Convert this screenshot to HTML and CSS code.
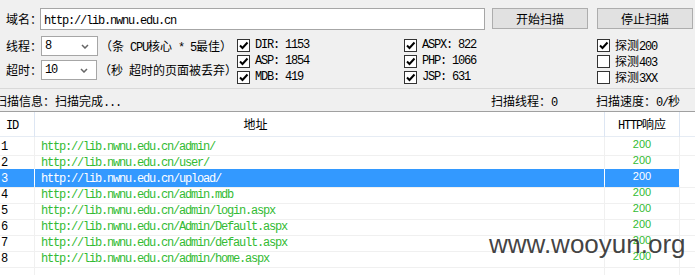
FILE: index.html
```html
<!DOCTYPE html>
<html lang="zh-CN">
<head>
    <meta charset="UTF-8">
    <meta name="viewport" content="width=device-width, initial-scale=1.0">
    <title>目录扫描</title>
    <link rel="stylesheet" href="styles.css">
</head>
<body>
    <div class="scanner">
        <div class="top-panel">
            <div class="domain-row">
                <span class="field-label">域名：</span>
                <div class="text-input"><span class="mono">http://lib.nwnu.edu.cn</span></div>
                <button class="btn">开始扫描</button>
                <button class="btn">停止扫描</button>
            </div>
            <div class="options">
                <div class="settings">
                    <div class="setting-row">
                        <span class="field-label">线程：</span>
                        <div class="select">
                            <span class="mono">8</span>
                            <svg width="8" height="5" viewBox="0 0 8 5"><path d="M1 1 L4 4 L7 1" fill="none" stroke="#666" stroke-width="1.5"/></svg>
                        </div>
                        <span class="hint">（条<span class="mono"> CPU</span>核心<span class="mono"> * 5</span>最佳）</span>
                    </div>
                    <div class="setting-row">
                        <span class="field-label">超时：</span>
                        <div class="select">
                            <span class="mono">10</span>
                            <svg width="8" height="5" viewBox="0 0 8 5"><path d="M1 1 L4 4 L7 1" fill="none" stroke="#666" stroke-width="1.5"/></svg>
                        </div>
                        <span class="hint">（秒<span class="mono"> </span>超时的页面被丢弃）</span>
                    </div>
                </div>
                <div class="checks">
                    <div class="check"><span class="box"><svg width="11" height="11" viewBox="0 0 11 11"><path d="M2 5.5 L4.5 8 L9.5 2.5" fill="none" stroke="#000" stroke-width="2"/></svg></span><span class="mono">DIR: 1153</span></div>
                    <div class="check"><span class="box"><svg width="11" height="11" viewBox="0 0 11 11"><path d="M2 5.5 L4.5 8 L9.5 2.5" fill="none" stroke="#000" stroke-width="2"/></svg></span><span class="mono">ASP: 1854</span></div>
                    <div class="check"><span class="box"><svg width="11" height="11" viewBox="0 0 11 11"><path d="M2 5.5 L4.5 8 L9.5 2.5" fill="none" stroke="#000" stroke-width="2"/></svg></span><span class="mono">MDB: 419</span></div>
                    <div class="check"><span class="box"><svg width="11" height="11" viewBox="0 0 11 11"><path d="M2 5.5 L4.5 8 L9.5 2.5" fill="none" stroke="#000" stroke-width="2"/></svg></span><span class="mono">ASPX: 822</span></div>
                    <div class="check"><span class="box"><svg width="11" height="11" viewBox="0 0 11 11"><path d="M2 5.5 L4.5 8 L9.5 2.5" fill="none" stroke="#000" stroke-width="2"/></svg></span><span class="mono">PHP: 1066</span></div>
                    <div class="check"><span class="box"><svg width="11" height="11" viewBox="0 0 11 11"><path d="M2 5.5 L4.5 8 L9.5 2.5" fill="none" stroke="#000" stroke-width="2"/></svg></span><span class="mono">JSP: 631</span></div>
                    <div class="check"><span class="box"><svg width="11" height="11" viewBox="0 0 11 11"><path d="M2 5.5 L4.5 8 L9.5 2.5" fill="none" stroke="#000" stroke-width="2"/></svg></span><span>探测<span class="mono">200</span></span></div>
                    <div class="check"><span class="box"></span><span>探测<span class="mono">403</span></span></div>
                    <div class="check"><span class="box"></span><span>探测<span class="mono">3XX</span></span></div>
                </div>
            </div>
        </div>

        <div class="status-bar">
            <span class="status-info">扫描信息：扫描完成<span class="mono">...</span></span>
            <span>扫描线程：<span class="mono">0</span></span>
            <span>扫描速度：<span class="mono">0/</span>秒</span>
        </div>

        <div class="result-table">
            <div class="grid-row table-head">
                <div class="head-cell col-id"><span class="mono">ID</span></div>
                <div class="head-cell col-url">地址</div>
                <div class="head-cell col-code"><span class="mono">HTTP</span>响应</div>
                <div class="head-cell filler"></div>
            </div>
            <div id="rows"></div>
            <div class="grid-row row tail">
                <div class="cell"></div>
                <div class="cell"></div>
                <div class="cell"></div>
                <div class="cell filler"></div>
            </div>
        </div>

        <div class="watermark">www.wooyun.org</div>
    </div>

    <script>
        const RESULTS = [
            'http://lib.nwnu.edu.cn/admin/',
            'http://lib.nwnu.edu.cn/user/',
            'http://lib.nwnu.edu.cn/upload/',
            'http://lib.nwnu.edu.cn/admin.mdb',
            'http://lib.nwnu.edu.cn/admin/login.aspx',
            'http://lib.nwnu.edu.cn/Admin/Default.aspx',
            'http://lib.nwnu.edu.cn/admin/default.aspx',
            'http://lib.nwnu.edu.cn/admin/home.aspx'
        ];
        const SELECTED_ROW = 3;

        const rowsElement = document.getElementById('rows');

        RESULTS.forEach((url, i) => {
            const row = document.createElement('div');
            row.className = 'grid-row row';
            if (i + 1 === SELECTED_ROW) {
                row.classList.add('selected');
            }
            row.innerHTML =
                `<div class="cell col-id"><span class="mono">${i + 1}</span></div>` +
                `<div class="cell col-url"><span class="mono">${url}</span></div>` +
                `<div class="cell col-code">200</div>` +
                `<div class="cell filler"></div>`;
            rowsElement.appendChild(row);
        });
    </script>
</body>
</html>
```

FILE: styles.css
```css
* {
    box-sizing: border-box;
}

body {
    margin: 0;
    width: 695px;
    height: 275px;
    overflow: hidden;
    background-color: #fff;
    font-family: "Noto Sans CJK SC", sans-serif;
    font-size: 12px;
    color: #000;
}

.scanner {
    position: relative;
    height: 275px;
}

.mono {
    font-family: "Liberation Mono", "Noto Sans CJK SC", monospace;
    letter-spacing: -1.2px;
}

/* top controls */
.top-panel {
    height: 89px;
    padding: 8px 2px 0 6px;
    background-color: #f0f0f0;
    border-bottom: 1px solid #d9d9d9;
}

.domain-row {
    display: flex;
    align-items: flex-start;
}

.field-label {
    width: 34px;
    white-space: nowrap;
    line-height: 22px;
}

.text-input {
    width: 445px;
    height: 22px;
    margin-right: 7px;
    padding: 0 3px;
    border: 1px solid #a6a6a6;
    background-color: #fff;
    line-height: 20px;
}

.btn {
    width: 96px;
    height: 21px;
    padding: 0;
    border: 1px solid #adadad;
    background-color: #e1e1e1;
    font-family: inherit;
    font-size: 12px;
    color: #000;
}

.btn + .btn {
    margin-left: 9px;
}

.options {
    display: flex;
    margin-top: 6px;
}

.settings {
    width: 231px;
    display: flex;
    flex-direction: column;
    gap: 4px;
}

.setting-row {
    display: flex;
    align-items: center;
    height: 20px;
}

.setting-row .field-label {
    width: 35px;
    line-height: 20px;
}

.select {
    display: flex;
    align-items: center;
    justify-content: space-between;
    width: 57px;
    height: 20px;
    margin-right: 2px;
    padding: 0 8px 0 3px;
    border: 1px solid #a6a6a6;
    background-color: #fff;
}

.hint {
    white-space: nowrap;
}

.checks {
    display: grid;
    grid-template-columns: 167px 193px auto;
    grid-template-rows: repeat(3, 16px);
    grid-auto-flow: column;
    margin-top: 1px;
}

.check {
    display: flex;
    align-items: center;
    gap: 5px;
    white-space: nowrap;
}

.box {
    display: flex;
    align-items: center;
    justify-content: center;
    width: 13px;
    height: 13px;
    border: 1px solid #333;
    background-color: #fff;
}

/* status line */
.status-bar {
    display: grid;
    grid-template-columns: 491px 105px auto;
    height: 23px;
    padding-top: 1px;
    background-color: #f0f0f0;
    border-bottom: 1px solid #a0a0a0;
    line-height: 21px;
    white-space: nowrap;
}

.status-info {
    margin-left: -5px;
}

/* result list */
.grid-row {
    display: grid;
    grid-template-columns: 35px 570px 75px 1fr;
}

.table-head {
    height: 25px;
    background-color: #fff;
    border-bottom: 1px solid #e6ecf4;
}

.head-cell {
    line-height: 24px;
    border-right: 1px solid #dde6f3;
}

.head-cell.col-id {
    padding-left: 6px;
}

.head-cell.col-url {
    text-align: center;
    padding-right: 128px;
}

.head-cell.col-code {
    text-align: center;
}

.head-cell.filler {
    border-right: none;
}

.row {
    height: 16px;
}

.cell {
    line-height: 15px;
    border-right: 1px solid #f0f0f0;
    border-bottom: 1px solid #f0f0f0;
    white-space: nowrap;
}

.cell.filler {
    border-right: none;
}

.cell.col-id {
    padding-left: 1px;
}

.cell.col-url {
    padding-left: 6px;
    color: #33bb33;
}

.cell.col-code {
    text-align: center;
    font-family: "Liberation Sans", sans-serif;
    font-size: 11px;
    color: #33bb33;
}

.row.selected .cell {
    background-color: #3399ff;
    border-right-color: #fff;
    color: #fff;
}

.row.selected .cell.filler {
    background-color: #fff;
}

.row.tail {
    height: 12px;
}

.row.tail .cell {
    border-bottom: none;
}

.watermark {
    position: absolute;
    left: 489px;
    top: 231px;
    font-family: "Liberation Sans", sans-serif;
    font-size: 26px;
    line-height: 1;
    color: rgba(34, 34, 34, 0.85);
}
```
